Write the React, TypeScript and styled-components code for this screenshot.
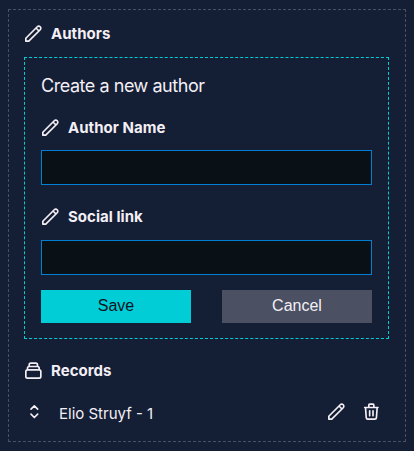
import React from "react";
import styled, { createGlobalStyle } from "styled-components";

const GlobalStyle = createGlobalStyle`
  *, *::before, *::after { box-sizing: border-box; }
  body {
    margin: 0;
    background: #141e35;
    color: #f3eff5;
    font-family: Inter, "Liberation Sans", sans-serif;
    -webkit-font-smoothing: antialiased;
  }
`;

const Page = styled.main`
  width: 414px;
  height: 451px;
  padding: 9px 8px;
  overflow: hidden;
`;

const Field = styled.section`
  height: 433px;
  border: 1px dashed #4a5063;
  padding: 14px 16px 0 15px;
`;

const Label = styled.div<{ $top?: number }>`
  display: flex;
  align-items: center;
  height: 20px;
  margin-top: ${({ $top = 0 }) => $top}px;
  font-size: 15px;
  line-height: 20px;
  font-weight: 650;
`;

const LabelText = styled.span`
  margin-left: 8px;
  letter-spacing: 0.04px;
  white-space: nowrap;
`;

const Svg = styled.svg`
  display: block;
  flex: none;
  width: 20px;
  height: 20px;
  margin-left: -1px;
  fill: none;
  stroke: currentColor;
  stroke-width: 2;
  stroke-linecap: round;
  stroke-linejoin: round;
`;

const Form = styled.form`
  height: 282px;
  margin-top: 13px;
  padding: 16px;
  border: 1px dashed #00cdd4;
`;

const Title = styled.h3`
  margin: 0;
  height: 24px;
  font-size: 18px;
  line-height: 24px;
  font-weight: 430;
  letter-spacing: -0.46px;
  white-space: nowrap;
`;

const Input = styled.input<{ $top: number }>`
  display: block;
  width: 100%;
  height: 35px;
  margin-top: ${({ $top }) => $top}px;
  padding: 0 8px;
  border: 1px solid #007fd4;
  border-radius: 0;
  outline: none;
  background: #091116;
  color: inherit;
`;

const Actions = styled.div`
  display: flex;
  justify-content: space-between;
  margin-top: 15px;
`;

const Button = styled.button<{ $secondary?: boolean }>`
  width: 150px;
  height: 33px;
  padding: 0 0 2px;
  border: 0;
  background: ${({ $secondary }) => ($secondary ? "#4b5062" : "#00cdd6")};
  color: ${({ $secondary }) => ($secondary ? "#f3eff5" : "#0e131f")};
  font: 16px/24px "Liberation Sans", Arial, sans-serif;
`;

const RecordRow = styled.div`
  display: flex;
  align-items: center;
  height: 20px;
  margin-top: 21px;
  padding: 0 8px 0 1px;
`;

const RecordName = styled.span`
  flex: 1;
  margin: 3px 0 0 15px;
  font-size: 15px;
  line-height: 20px;
  font-weight: 430;
  letter-spacing: 0;
`;

const IconButton = styled.button`
  padding: 0;
  margin-left: 16px;
  border: 0;
  background: none;
  color: inherit;
`;

const paths = {
  pencil:
    "M15.232 5.232l3.536 3.536m-2.036-5.036a2.5 2.5 0 113.536 3.536L6.5 21.036H3v-3.572L16.732 3.732z",
  collection:
    "M19 11H5m14 0a2 2 0 012 2v6a2 2 0 01-2 2H5a2 2 0 01-2-2v-6a2 2 0 012-2m14 0V9a2 2 0 00-2-2M5 11V9a2 2 0 012-2m0 0V5a2 2 0 012-2h6a2 2 0 012 2v2M7 7h10",
  selector: "M8 9l4-4 4 4m0 6l-4 4-4-4",
  trash:
    "M19 7l-.867 12.142A2 2 0 0116.138 21H7.862a2 2 0 01-1.995-1.858L5 7m5 4v6m4-6v6m1-10V4a1 1 0 00-1-1h-4a1 1 0 00-1 1v3M4 7h16",
};

const Icon = ({ name }: { name: keyof typeof paths }) => (
  <Svg viewBox="-0.4 0.4 24 24" aria-hidden="true">
    <path d={paths[name]} />
  </Svg>
);

export default function App() {
  return (
    <>
      <GlobalStyle />
      <Page>
        <Field>
          <Label>
            <Icon name="pencil" />
            <LabelText>Authors</LabelText>
          </Label>
          <Form>
            <Title>Create a new author</Title>
            <Label $top={20}>
              <Icon name="pencil" />
              <LabelText>Author Name</LabelText>
            </Label>
            <Input $top={12} aria-label="Author Name" />
            <Label $top={22}>
              <Icon name="pencil" />
              <LabelText>Social link</LabelText>
            </Label>
            <Input $top={13} aria-label="Social link" />
            <Actions>
              <Button type="button">Save</Button>
              <Button type="button" $secondary>Cancel</Button>
            </Actions>
          </Form>
          <Label $top={22}>
            <Icon name="collection" />
            <LabelText>Records</LabelText>
          </Label>
          <RecordRow>
            <Icon name="selector" />
            <RecordName>Elio Struyf - 1</RecordName>
            <IconButton type="button" aria-label="Edit">
              <Icon name="pencil" />
            </IconButton>
            <IconButton type="button" aria-label="Delete">
              <Icon name="trash" />
            </IconButton>
          </RecordRow>
        </Field>
      </Page>
    </>
  );
}
